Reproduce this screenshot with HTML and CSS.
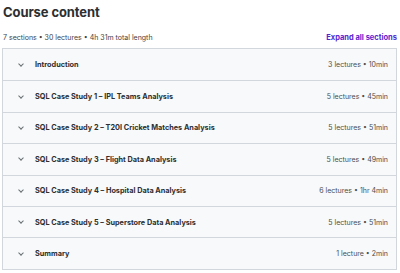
FILE: index.html
```html
<!DOCTYPE html>
<html lang="en">

<head>
    <meta charset="utf8">
    <title>Course content</title>
    <link rel="stylesheet" href="styles.css">
</head>

<body>
    <div class="course-content">
        <h2>Course content</h2>
        <div class="summary">
            <span>7 sections • 30 lectures • 4h 31m total length</span>
            <button class="expand-all">Expand all sections</button>
        </div>
        <div class="sections">
            <div class="section">
                <span class="chevron"></span>
                <span class="title">Introduction</span>
                <span class="meta">3 lectures • 10min</span>
            </div>
            <div class="section">
                <span class="chevron"></span>
                <span class="title">SQL Case Study 1 – IPL Teams Analysis</span>
                <span class="meta">5 lectures • 45min</span>
            </div>
            <div class="section">
                <span class="chevron"></span>
                <span class="title">SQL Case Study 2 – T20I Cricket Matches Analysis</span>
                <span class="meta">5 lectures • 51min</span>
            </div>
            <div class="section">
                <span class="chevron"></span>
                <span class="title">SQL Case Study 3 – Flight Data Analysis</span>
                <span class="meta">5 lectures • 49min</span>
            </div>
            <div class="section">
                <span class="chevron"></span>
                <span class="title">SQL Case Study 4 – Hospital Data Analysis</span>
                <span class="meta">6 lectures • 1hr 4min</span>
            </div>
            <div class="section">
                <span class="chevron"></span>
                <span class="title">SQL Case Study 5 – Superstore Data Analysis</span>
                <span class="meta">5 lectures • 51min</span>
            </div>
            <div class="section">
                <span class="chevron"></span>
                <span class="title">Summary</span>
                <span class="meta">1 lecture • 2min</span>
            </div>
        </div>
    </div>
</body>

</html>
```

FILE: styles.css
```css
* {
    box-sizing: border-box;
}

body {
    margin: 0;
    background-color: white;
    font-family: Inter, "Liberation Sans", sans-serif;
    color: #2d2f31;
}

div.course-content {
    display: flex;
    flex-direction: column;
    padding: 2px 3px 0 2px;
}

div.course-content h2 {
    margin: 0 0 0 1px;
    font-size: 13px;
    font-weight: 700;
    letter-spacing: -0.1px;
    line-height: 20px;
}

div.course-content div.summary {
    display: flex;
    justify-content: space-between;
    align-items: center;
    height: 26px;
    padding: 4px 0 0 1px;
    font-size: 7px;
    color: #3e4143;
}

div.course-content button.expand-all {
    background-color: transparent;
    border: 0 none;
    padding: 0;
    font-family: inherit;
    font-size: 7.5px;
    font-weight: 700;
    color: #5624d0;
    cursor: pointer;
}

div.course-content div.sections {
    display: flex;
    flex-direction: column;
    border: 1px solid #d1d7dc;
}

div.course-content div.section {
    display: flex;
    align-items: center;
    height: 31.4px;
    padding: 0 8px 0 16px;
    background-color: #f7f9fa;
    border-top: 1px solid #d1d7dc;
}

div.course-content div.section:first-child {
    border-top: 0 none;
}

div.course-content span.chevron {
    width: 4px;
    height: 4px;
    border-right: 1px solid #6a6f73;
    border-bottom: 1px solid #6a6f73;
    transform: rotate(45deg);
    margin: -2px 12px 0 0;
}

div.course-content span.title {
    flex-grow: 1;
    font-size: 7.3px;
    font-weight: 700;
}

div.course-content span.meta {
    font-size: 7px;
    color: #4a4d50;
}
```
